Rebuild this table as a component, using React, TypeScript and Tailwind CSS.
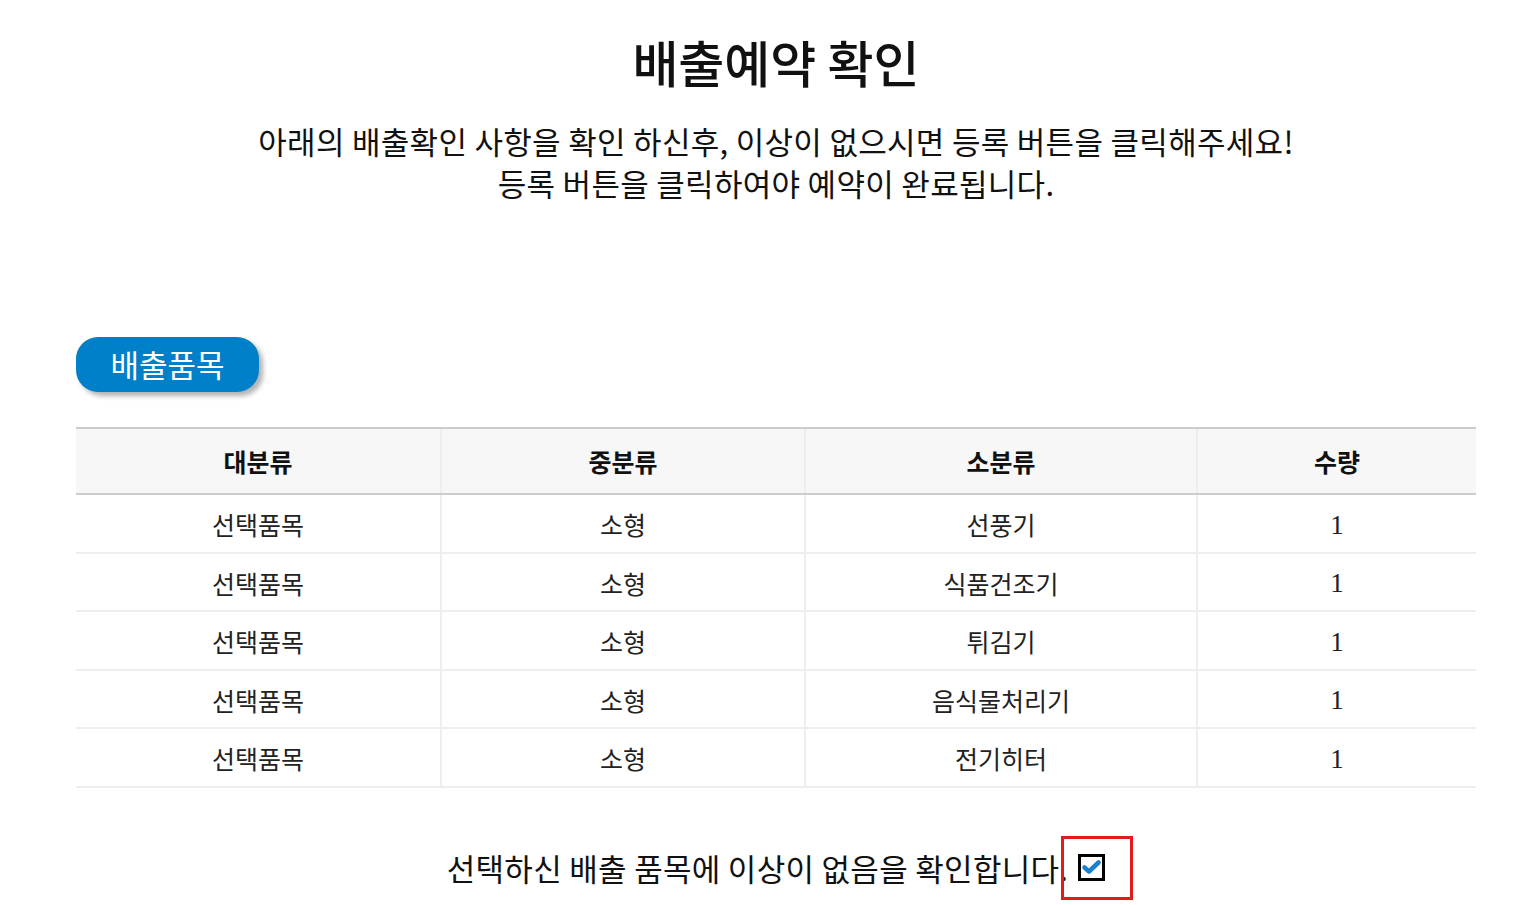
import React from 'react'

const rows = [
  { big: '선택품목', mid: '소형', small: '선풍기', qty: 1 },
  { big: '선택품목', mid: '소형', small: '식품건조기', qty: 1 },
  { big: '선택품목', mid: '소형', small: '튀김기', qty: 1 },
  { big: '선택품목', mid: '소형', small: '음식물처리기', qty: 1 },
  { big: '선택품목', mid: '소형', small: '전기히터', qty: 1 }
]

const kr = { fontFamily: '"Noto Sans CJK KR", "Noto Sans", sans-serif' }
const cols = 'grid grid-cols-[364px_364px_392px_280px]'

export default function App() {
  return (
    <div className="min-h-[905px] bg-white text-[#111]" style={kr}>
      <div className="ml-[76px] w-[1400px] pt-[31px]">
        <h1 className="text-center text-[50px] leading-[60px] font-medium">
          배출예약 확인
        </h1>
        <div className="mt-[29px] text-center text-[31px] leading-[42px] tracking-[0.3px]">
          <p>아래의 배출확인 사항을 확인 하신후, 이상이 없으시면 등록 버튼을 클릭해주세요!</p>
          <p>등록 버튼을 클릭하여야 예약이 완료됩니다.</p>
        </div>

        <div className="mt-[133px] flex h-[55px] w-[183px] items-center justify-center rounded-[22px] bg-[#0080c8] text-[31px] text-white shadow-[4px_4px_5px_rgba(0,0,0,0.3)]">
          배출품목
        </div>

        <div className="mt-[35px] border-t-2 border-[#cccccc]">
          <div className={`${cols} h-[66px] border-b-2 border-[#cccccc] bg-[#f7f7f7] text-[25px] font-bold`}>
            <div className="flex items-center justify-center pt-[2px]">대분류</div>
            <div className="flex items-center justify-center border-l-2 border-[#eeeeee] pt-[2px]">중분류</div>
            <div className="flex items-center justify-center border-l-2 border-[#eeeeee] pt-[2px]">소분류</div>
            <div className="flex items-center justify-center border-l-2 border-[#eeeeee] pt-[2px]">수량</div>
          </div>
          {rows.map((r, i) => (
            <div key={i} className={`${cols} h-[58.5px] border-b-2 border-[#eeeeee] text-[25px] text-[#222]`}>
              <div className="flex items-center justify-center pt-[3px]">{r.big}</div>
              <div className="flex items-center justify-center border-l-2 border-[#eeeeee] pt-[3px]">{r.mid}</div>
              <div className="flex items-center justify-center border-l-2 border-[#eeeeee] pt-[3px]">{r.small}</div>
              <div
                className="flex items-center justify-center border-l-2 border-[#eeeeee] pt-[3px] text-[27px]"
                style={{ fontFamily: '"Liberation Serif", serif' }}
              >
                {r.qty}
              </div>
            </div>
          ))}
        </div>

        <div className="mt-[60px] flex items-center justify-center">
          <span className="text-[31px] leading-[40px] tracking-[0.3px]">선택하신 배출 품목에 이상이 없음을 확인합니다.</span>
          <span className="relative ml-[10px] inline-flex">
            <span className="flex h-[27px] w-[27px] items-center justify-center border-[3px] border-black bg-white">
              <svg width="19" height="15" viewBox="0 0 19 15">
                <path d="M2.5 7.5 L7 11.5 L16.5 2.5" fill="none" stroke="#1a80d0" strokeWidth="4.5" strokeLinecap="round" strokeLinejoin="round" />
              </svg>
            </span>
            <span className="absolute left-[-17px] top-[-18px] h-[64px] w-[72px] border-[3px] border-[#e21c1c]" />
          </span>
        </div>
      </div>
    </div>
  )
}
